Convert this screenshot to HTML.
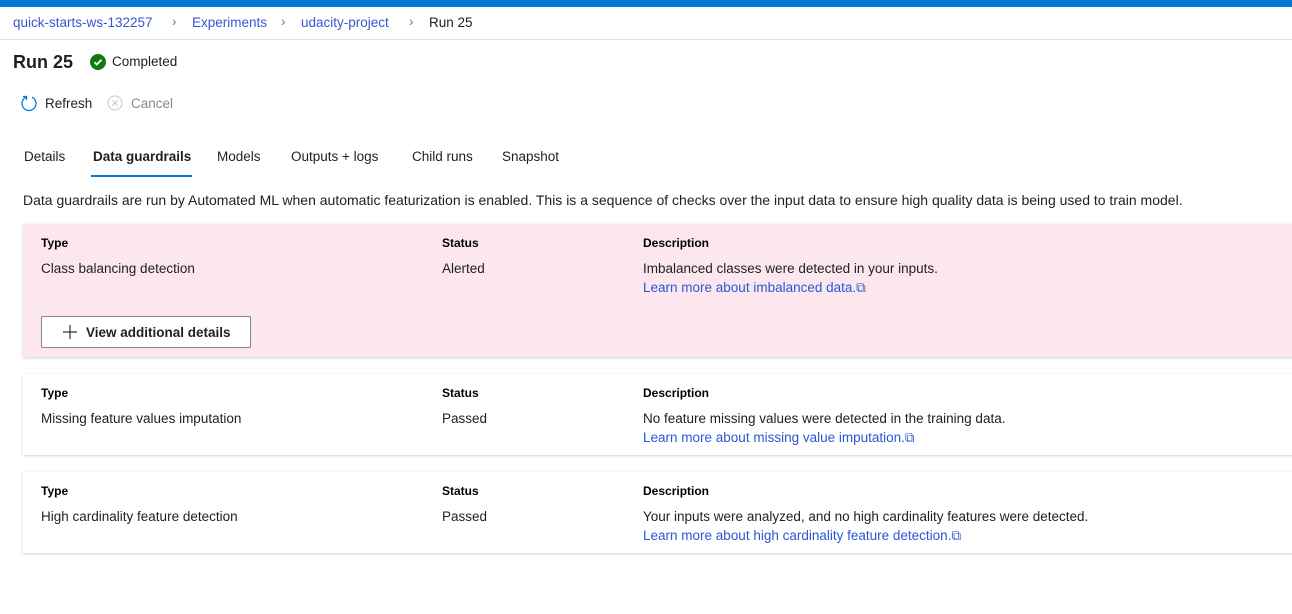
<!DOCTYPE html>
<html><head><style>
*{margin:0;padding:0;box-sizing:border-box}
body{width:1292px;height:614px;background:#fff;font-family:"Liberation Sans",sans-serif;color:#201f1e;position:relative;overflow:hidden;font-size:13.5px}
.a{position:absolute;white-space:nowrap}
.top{position:absolute;left:0;top:0;width:1292px;height:7px;background:#0078d4}
.bc{top:15px;font-size:13.5px;color:#3a55d0}
.sep{color:#777}
.card{position:absolute;left:23px;width:1275px;background:#fff;box-shadow:0 1px 3px rgba(0,0,0,.18)}
.h{font-weight:bold;font-size:12px;color:#000}
.lk{color:#2b56d6}
</style></head><body>
<div class="top"></div>
<div class="a bc" style="left:13px">quick-starts-ws-132257</div>
<div class="a sep" style="left:172px;top:14px">&#x203A;</div>
<div class="a bc" style="left:192px">Experiments</div>
<div class="a sep" style="left:281px;top:14px">&#x203A;</div>
<div class="a bc" style="left:301px">udacity-project</div>
<div class="a sep" style="left:409px;top:14px">&#x203A;</div>
<div class="a" style="left:429px;top:15px;color:#201f1e">Run 25</div>
<div class="a" style="left:0;top:39px;width:1292px;height:1px;background:#ddd"></div>
<div class="a" style="left:13px;top:52px;font-size:18px;font-weight:bold">Run 25</div>
<svg class="a" style="left:90px;top:54px" width="16" height="16"><circle cx="8" cy="8" r="8" fill="#107c10"/><path d="M4.5 8.2l2.3 2.3 4.7-4.8" stroke="#fff" stroke-width="1.8" fill="none"/></svg>
<div class="a" style="left:112px;top:54px">Completed</div>
<svg class="a" style="left:20px;top:94px" width="18" height="18"><path d="M6 3.2A7 7 0 1 0 12 3.2" stroke="#0078d4" stroke-width="1.3" fill="none"/><path d="M3 2.5h3.5v3.5" stroke="#0078d4" stroke-width="1.3" fill="none"/></svg>
<div class="a" style="left:45px;top:96px">Refresh</div>
<svg class="a" style="left:107px;top:95px" width="16" height="16"><circle cx="8" cy="8" r="7" stroke="#c8c6c4" fill="none"/><path d="M5.5 5.5l5 5M10.5 5.5l-5 5" stroke="#c8c6c4"/></svg>
<div class="a" style="left:131px;top:96px;color:#8a8886">Cancel</div>
<div class="a" style="left:24px;top:149px">Details</div>
<div class="a" style="left:93px;top:149px;font-weight:bold">Data guardrails</div>
<div class="a" style="left:91px;top:175px;width:101px;height:2px;background:#0078d4"></div>
<div class="a" style="left:217px;top:149px">Models</div>
<div class="a" style="left:291px;top:149px">Outputs + logs</div>
<div class="a" style="left:412px;top:149px">Child runs</div>
<div class="a" style="left:502px;top:149px">Snapshot</div>
<div class="a" style="left:23px;top:192px;font-size:14px">Data guardrails are run by Automated ML when automatic featurization is enabled. This is a sequence of checks over the input data to ensure high quality data is being used to train model.</div>

<div class="card" style="top:224px;height:133px;background:#fde7ee"></div>
<div class="a h" style="left:41px;top:236px">Type</div><div class="a h" style="left:442px;top:236px">Status</div><div class="a h" style="left:643px;top:236px">Description</div>
<div class="a" style="left:41px;top:261px">Class balancing detection</div><div class="a" style="left:442px;top:261px">Alerted</div>
<div class="a" style="left:643px;top:261px">Imbalanced classes were detected in your inputs.</div>
<div class="a lk" style="left:643px;top:280px">Learn more about imbalanced data.&#x29C9;</div>
<div class="a" style="left:41px;top:316px;width:210px;height:32px;background:#fff;border:1px solid #8a8886;border-radius:2px"></div>
<svg class="a" style="left:62px;top:324px" width="16" height="16"><path d="M8 1v14M1 8h14" stroke="#333" stroke-width="1.2"/></svg>
<div class="a" style="left:86px;top:325px;font-weight:bold;font-size:13.5px">View additional details</div>

<div class="card" style="top:374px;height:81px"></div>
<div class="a h" style="left:41px;top:386px">Type</div><div class="a h" style="left:442px;top:386px">Status</div><div class="a h" style="left:643px;top:386px">Description</div>
<div class="a" style="left:41px;top:411px">Missing feature values imputation</div><div class="a" style="left:442px;top:411px">Passed</div>
<div class="a" style="left:643px;top:411px">No feature missing values were detected in the training data.</div>
<div class="a lk" style="left:643px;top:430px">Learn more about missing value imputation.&#x29C9;</div>

<div class="card" style="top:472px;height:81px"></div>
<div class="a h" style="left:41px;top:484px">Type</div><div class="a h" style="left:442px;top:484px">Status</div><div class="a h" style="left:643px;top:484px">Description</div>
<div class="a" style="left:41px;top:509px">High cardinality feature detection</div><div class="a" style="left:442px;top:509px">Passed</div>
<div class="a" style="left:643px;top:509px">Your inputs were analyzed, and no high cardinality features were detected.</div>
<div class="a lk" style="left:643px;top:528px">Learn more about high cardinality feature detection.&#x29C9;</div>
</body></html>
